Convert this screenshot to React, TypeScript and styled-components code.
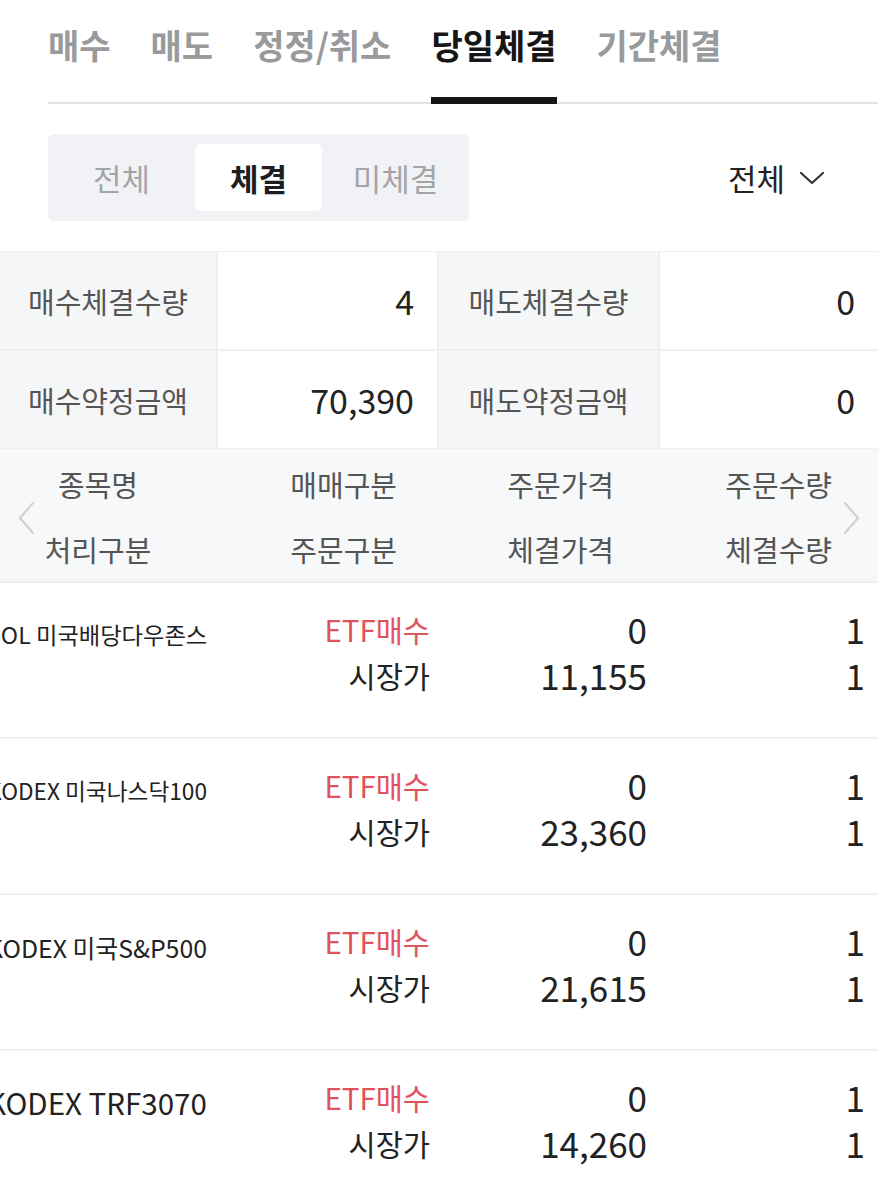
import React, { useLayoutEffect, useRef, useState } from "react";
import styled, { createGlobalStyle } from "styled-components";

const GlobalStyle = createGlobalStyle`
  html, body {
    margin: 0;
    padding: 0;
    background: #fff;
    overflow-x: hidden;
  }
  body {
    font-family: "Noto Sans CJK KR", "Noto Sans", sans-serif;
    color: #222;
  }
`;

interface Execution {
  name: string;
  tradeType: string;
  orderType: string;
  orderPrice: string;
  execPrice: string;
  orderQty: string;
  execQty: string;
}

const executions: Execution[] = [
  { name: "SOL 미국배당다우존스", tradeType: "ETF매수", orderType: "시장가", orderPrice: "0", execPrice: "11,155", orderQty: "1", execQty: "1" },
  { name: "KODEX 미국나스닥100", tradeType: "ETF매수", orderType: "시장가", orderPrice: "0", execPrice: "23,360", orderQty: "1", execQty: "1" },
  { name: "KODEX 미국S&P500", tradeType: "ETF매수", orderType: "시장가", orderPrice: "0", execPrice: "21,615", orderQty: "1", execQty: "1" },
  { name: "KODEX TRF3070", tradeType: "ETF매수", orderType: "시장가", orderPrice: "0", execPrice: "14,260", orderQty: "1", execQty: "1" },
];

const tabs = ["매수", "매도", "정정/취소", "당일체결", "기간체결"];
const filters = ["전체", "체결", "미체결"];

// 종목명은 칸 너비에 맞게 글자 크기를 줄이거나 키움
const NAME_WIDTH = 220;
const BASE_SIZE = 20;

function FitName({ text }: { text: string }) {
  const ref = useRef<HTMLSpanElement>(null);
  const [size, setSize] = useState(BASE_SIZE);

  useLayoutEffect(() => {
    if (!ref.current) return;
    const w = ref.current.offsetWidth;
    if (w > 0) setSize(Math.min(30, (BASE_SIZE * NAME_WIDTH) / w));
  }, [text]);

  return (
    <NameCell>
      <NameMeasure ref={ref}>{text}</NameMeasure>
      <NameText style={{ fontSize: `${size}px` }}>{text}</NameText>
    </NameCell>
  );
}

export default function App() {
  return (
    <>
      <GlobalStyle />
      <Page>
        <TopTabs>
          {tabs.map((tab) => (
            <TabItem key={tab} $active={tab === "당일체결"}>
              {tab}
            </TabItem>
          ))}
        </TopTabs>

        <FilterBar>
          <Segment>
            {filters.map((f) => (
              <SegButton key={f} $active={f === "체결"}>
                {f}
              </SegButton>
            ))}
          </Segment>
          <Dropdown>
            전체
            <svg width="26" height="16" viewBox="0 0 26 16" fill="none">
              <path d="M2 3 L13 13 L24 3" stroke="#333" strokeWidth="2.2" strokeLinecap="round" strokeLinejoin="round" />
            </svg>
          </Dropdown>
        </FilterBar>

        <Summary>
          <SumLabel>매수체결수량</SumLabel>
          <SumValue>4</SumValue>
          <SumLabel>매도체결수량</SumLabel>
          <SumValue>0</SumValue>
          <SumLabel>매수약정금액</SumLabel>
          <SumValue>70,390</SumValue>
          <SumLabel>매도약정금액</SumLabel>
          <SumValue>0</SumValue>
        </Summary>

        <TableHead>
          <ScrollArrow $side="left">
            <svg width="18" height="34" viewBox="0 0 18 34" fill="none">
              <path d="M16 2 L3 17 L16 32" stroke="#cdd0d3" strokeWidth="2" strokeLinecap="round" strokeLinejoin="round" />
            </svg>
          </ScrollArrow>
          <HeadCell $first>종목명</HeadCell>
          <HeadCell>매매구분</HeadCell>
          <HeadCell>주문가격</HeadCell>
          <HeadCell>주문수량</HeadCell>
          <HeadCell $first>처리구분</HeadCell>
          <HeadCell>주문구분</HeadCell>
          <HeadCell>체결가격</HeadCell>
          <HeadCell>체결수량</HeadCell>
          <ScrollArrow $side="right">
            <svg width="18" height="34" viewBox="0 0 18 34" fill="none">
              <path d="M2 2 L15 17 L2 32" stroke="#cdd0d3" strokeWidth="2" strokeLinecap="round" strokeLinejoin="round" />
            </svg>
          </ScrollArrow>
        </TableHead>

        {executions.map((e) => (
          <Row key={e.name}>
            <FitName text={e.name} />
            <Cell>
              <Line $red>{e.tradeType}</Line>
              <Line>{e.orderType}</Line>
            </Cell>
            <Cell>
              <NumLine>{e.orderPrice}</NumLine>
              <NumLine>{e.execPrice}</NumLine>
            </Cell>
            <Cell>
              <NumLine>{e.orderQty}</NumLine>
              <NumLine>{e.execQty}</NumLine>
            </Cell>
          </Row>
        ))}
      </Page>
    </>
  );
}

const Page = styled.div`
  width: 878px;
  overflow: hidden;
`;

const TopTabs = styled.nav`
  display: flex;
  gap: 40px;
  height: 104px;
  margin-left: 48px;
  border-bottom: 2px solid #dfe4e7;
  box-sizing: border-box;
`;

const TabItem = styled.div<{ $active: boolean }>`
  position: relative;
  padding-top: 20px;
  font-size: 34px;
  font-weight: 700;
  line-height: 50px;
  color: ${({ $active }) => ($active ? "#161616" : "#999a9c")};

  &::after {
    content: "";
    display: ${({ $active }) => ($active ? "block" : "none")};
    position: absolute;
    left: 0;
    right: 0;
    bottom: -2px;
    height: 7px;
    background: #161616;
  }
`;

const FilterBar = styled.div`
  display: flex;
  align-items: center;
  justify-content: space-between;
  padding: 30px 53px 30px 48px;
`;

const Segment = styled.div`
  display: grid;
  grid-template-columns: repeat(3, 127px);
  gap: 10px;
  padding: 10px;
  background: #f1f2f5;
  border-radius: 6px;
`;

const SegButton = styled.div<{ $active: boolean }>`
  display: flex;
  align-items: center;
  justify-content: center;
  height: 67px;
  border-radius: 6px;
  font-size: 31px;
  font-weight: ${({ $active }) => ($active ? 700 : 400)};
  color: ${({ $active }) => ($active ? "#1e1e1e" : "#a3a4a6")};
  background: ${({ $active }) => ($active ? "#fff" : "transparent")};
`;

const Dropdown = styled.div`
  display: flex;
  align-items: center;
  gap: 14px;
  font-size: 31px;
  color: #222;
`;

const Summary = styled.div`
  display: grid;
  grid-template-columns: 216px 219px 219px 1fr;
  grid-auto-rows: 97px;
  gap: 2px;
  background: #eeeff1;
  border-top: 1px solid #eeeff1;
  padding-bottom: 1px;
`;

const SumLabel = styled.div`
  display: flex;
  align-items: center;
  justify-content: center;
  background: #f5f6f8;
  font-size: 29px;
  color: #555;
`;

const SumValue = styled.div`
  display: flex;
  align-items: center;
  justify-content: flex-end;
  padding-right: 23px;
  background: #fff;
  font-size: 34px;
  color: #222;
`;

const TableHead = styled.div`
  position: relative;
  display: grid;
  grid-template-columns: 232px 198px 217px 218px;
  grid-template-rows: 66px 64px;
  padding-top: 2px;
  background: #f7f8fa;
  border-bottom: 2px solid #eeeff1;
`;

const HeadCell = styled.div<{ $first?: boolean }>`
  display: flex;
  align-items: center;
  justify-content: ${({ $first }) => ($first ? "center" : "flex-end")};
  font-size: 29px;
  color: #555;
  padding-right: ${({ $first }) => ($first ? "36px" : "33px")};
`;

const ScrollArrow = styled.div<{ $side: "left" | "right" }>`
  position: absolute;
  top: 52px;
  ${({ $side }) => ($side === "left" ? "left: 17px;" : "right: 17px;")}
  display: flex;
`;

const Row = styled.div`
  display: grid;
  grid-template-columns: 232px 198px 217px 218px;
  height: 156px;
  box-sizing: border-box;
  padding-top: 23px;
  border-bottom: 2px solid #eeeff1;
`;

const NameCell = styled.div`
  position: relative;
  margin-left: -13px;
  height: 58px;
  display: flex;
  align-items: center;
  white-space: nowrap;
`;

const NameMeasure = styled.span`
  position: absolute;
  visibility: hidden;
  font-size: ${BASE_SIZE}px;
  white-space: nowrap;
`;

const NameText = styled.span`
  color: #222;
  line-height: 1;
`;

const Cell = styled.div`
  display: flex;
  flex-direction: column;
  align-items: flex-end;
`;

const Line = styled.div<{ $red?: boolean }>`
  line-height: 46px;
  font-size: 29.5px;
  color: ${({ $red }) => ($red ? "#e0525e" : "#222")};
`;

const NumLine = styled.div`
  line-height: 46px;
  font-size: 35px;
  color: #222;
`;
